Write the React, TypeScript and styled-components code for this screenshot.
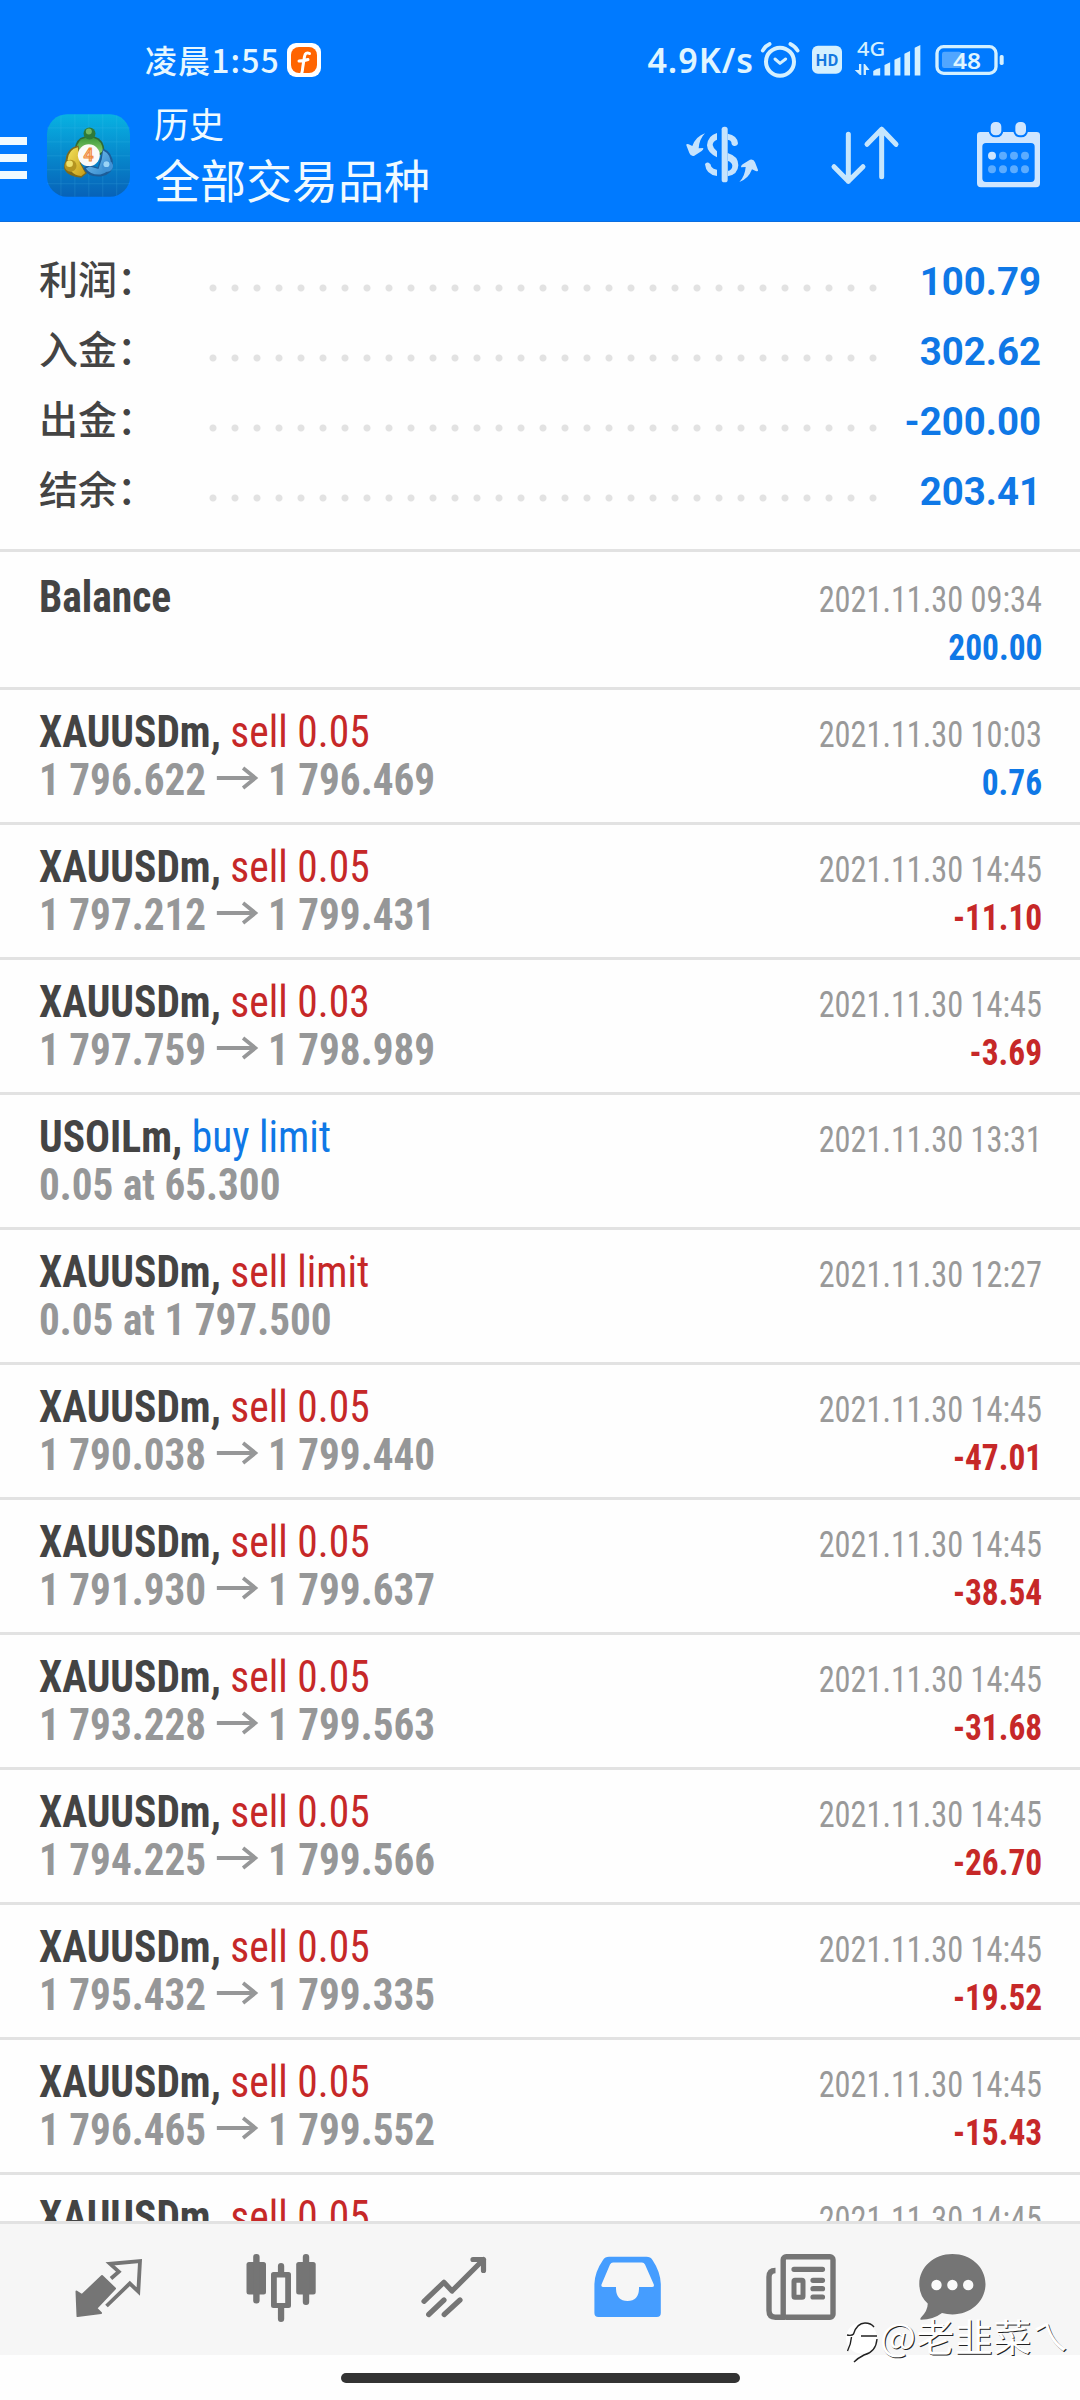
import React from "react";
import styled, { createGlobalStyle } from "styled-components";

const BLUE = "#007aff";
const VALUE_BLUE = "#0f78e6";
const RED = "#c62828";
const CJK = '"Noto Sans CJK SC", sans-serif';
const CONDENSED = '"Roboto Condensed", Roboto, sans-serif';

const GlobalStyle = createGlobalStyle`
  * { box-sizing: border-box; }
  html, body { margin: 0; padding: 0; background: #fefefe; }
  svg { display: block; flex: none; overflow: visible; }
`;

const Screen = styled.div`
  position: relative;
  display: flex;
  flex-direction: column;
  width: 1080px;
  height: 2400px;
  overflow: hidden;
  background: #fefefe;
`;

const Header = styled.header`
  flex: none;
  height: 222px;
  background: ${BLUE};
  border-bottom: 1px solid #0a6ee0;
  color: #f0faff;
`;

const StatusBar = styled.div`
  display: flex;
  align-items: center;
  height: 88px;
  padding: 32px 76px 0 145px;
`;

const Clock = styled.span`
  display: flex;
  align-items: center;
  height: 40px;
  padding-bottom: 2px;
  font: 500 32px/38px ${CJK};
  letter-spacing: 1.1px;
  color: #e6f7ff;
  width: 142px;
`;

const StatusRight = styled.div`
  display: flex;
  align-items: center;
  margin-left: auto;
  gap: 12px;
`;

const NetSpeed = styled.span`
  font: 600 34px/40px "Noto Sans", sans-serif;
  letter-spacing: 1px;
  color: #e0f5ff;
  margin-right: -6px;
  white-space: nowrap;
`;

const BatterySlot = styled.span`
  margin-left: 2px;
`;

const Toolbar = styled.div`
  display: flex;
  align-items: center;
  height: 134px;
  padding-right: 40px;
`;

const MenuButton = styled.div`
  display: flex;
  flex-direction: column;
  gap: 9px;
  width: 27px;
  margin-top: 5px;
  margin-right: 20px;
`;

const MenuBar = styled.span`
  height: 8px;
  background: #f0faff;
`;

const Titles = styled.div`
  display: flex;
  flex-direction: column;
  margin-left: 24px;
  font-family: ${CJK};
  color: #f0faff;
`;

const Title = styled.span`
  font-size: 35px;
  line-height: 46px;
`;

const Subtitle = styled.span`
  font-size: 46px;
  line-height: 64px;
`;

const Actions = styled.div`
  display: flex;
  align-items: center;
  margin-left: auto;
`;

const Action = styled.div<{ $before?: number }>`
  margin-left: ${(p) => p.$before ?? 0}px;
`;

const Summary = styled.section`
  flex: none;
  height: 330px;
  padding: 22px 39px 0 39px;
  border-bottom: 3px solid #e2e2e2;
`;

const SummaryRow = styled.div`
  display: grid;
  grid-template-columns: 163px 682px 1fr;
  align-items: center;
  height: 70px;
`;

const SummaryLabel = styled.span`
  padding-bottom: 4px;
  font: 500 39px/66px ${CJK};
  color: #444;
`;

const Leader = styled.span`
  height: 22px;
  margin-top: 17px;
  background: radial-gradient(circle at 50% 50%, #e2e2e2 3px, transparent 4px) 0 0 / 22px 22px repeat-x;
`;

const SummaryValue = styled.span`
  padding-top: 7px;
  font: 700 39px/63px Roboto, sans-serif;
  color: ${VALUE_BLUE};
  text-align: right;
  white-space: nowrap;
  transform: scaleX(0.985);
  transform-origin: right;
`;

const List = styled.section`
  flex: 1;
  min-height: 0;
  overflow: hidden;
  padding-top: 3px;
`;

const Row = styled.article`
  display: flex;
  justify-content: space-between;
  height: 135px;
  padding: 18px 38px 0 39px;
  border-bottom: 3px solid #e2e2e2;
  font-family: ${CONDENSED};
`;

const RowSide = styled.div<{ $end?: boolean }>`
  display: flex;
  flex-direction: column;
  align-items: ${(p) => (p.$end ? "flex-end" : "flex-start")};
  padding-top: ${(p) => (p.$end ? 3 : 0)}px;
`;

const Symbol = styled.span`
  font-size: 44px;
  line-height: 48px;
  font-weight: 700;
  color: #444;
  white-space: nowrap;
  transform: scaleX(0.943);
  transform-origin: left;
`;

const Side = styled.span<{ $tone: string }>`
  font-weight: 400;
  color: ${(p) => p.$tone};
`;

const Prices = styled.span`
  display: flex;
  align-items: center;
  gap: 10.5px;
  font-size: 44px;
  line-height: 48px;
  font-weight: 700;
  color: #969798;
  white-space: nowrap;
  transform: scaleX(0.936);
  transform-origin: left;
`;

const Time = styled.span`
  font-size: 36px;
  line-height: 48px;
  color: #999;
  white-space: nowrap;
  transform: scaleX(0.897);
  transform-origin: right;
`;

const Amount = styled.span<{ $tone: string }>`
  font-size: 36px;
  line-height: 48px;
  font-weight: 700;
  color: ${(p) => p.$tone};
  transform: scaleX(0.928);
  transform-origin: right;
`;

const Nav = styled.nav`
  flex: none;
  display: grid;
  grid-template-columns: 171px 175px 173px 172px 153px 67px;
  height: 134px;
  padding: 23px 0 0 75px;
  background: #f6f6f6;
  border-top: 3px solid #e2e2e2;
`;

const GestureArea = styled.div`
  flex: none;
  display: flex;
  justify-content: center;
  height: 45px;
  padding-top: 18px;
`;

const GesturePill = styled.div`
  width: 399px;
  height: 10px;
  border-radius: 5px;
  background: #333;
`;

const Watermark = styled.div`
  position: absolute;
  left: 842px;
  top: 2310px;
  display: flex;
  align-items: center;
  height: 50px;
  font: 400 38px/50px ${CJK};
  letter-spacing: 0.4px;
  color: #fff;
  text-shadow: 1px 1px 0 #222;
  white-space: nowrap;
`;

const ClockBadge = () => (
  <svg width="34" height="34" viewBox="0 0 34 34">
    <rect width="34" height="34" rx="9" fill="#fff" />
    <rect x="4" y="4" width="26" height="26" rx="8" fill="#ff6400" />
    <path d="M22.500 10.500Q18.500 8.500 17.500 13.500L15.800 24Q15.500 28 14.500 31M12 18Q17 18 21 16.500" stroke="#fff" strokeWidth="3" fill="none" strokeLinecap="round" />
  </svg>
);

const Alarm = () => (
  <svg width="40" height="40" viewBox="418 60 120 120" fill="none" stroke="#d4f0ff" strokeLinecap="round" strokeLinejoin="round">
    <circle cx="478" cy="125" r="42" strokeWidth="12" />
    <path d="M426 92Q432 79 447 72M509 72Q524 79 531 92" strokeWidth="11" />
    <path d="M463 117L478 130L495 117" strokeWidth="9" />
  </svg>
);

const Hd = () => (
  <svg width="30" height="40" viewBox="575 60 91 120">
    <rect x="575" y="77" width="91" height="85" rx="18" fill="#d4f0ff" />
    <text x="620.500" y="137" textAnchor="middle" fontFamily="Roboto, sans-serif" fontWeight="700" fontSize="49" textLength="68" fill="#1478e0">HD</text>
  </svg>
);

const Signal = () => (
  <svg width="67" height="40" viewBox="702 60 202 120" fill="#d4f0ff">
    <text x="711" y="108" fontFamily="Noto Sans, sans-serif" fontWeight="500" fontSize="59" textLength="85" lengthAdjust="spacingAndGlyphs">4G</text>
    <path d="M717 132h7v33h-4L704 150h13zM731 165v-33h4l14 18h-11v15z" />
    <path d="M760 167v-14q10-8 21-9v23zM794 167v-32l17-8v40zM824 167v-48l18-8v56zM854 167v-66l17-8v74zM885 167V83l17-8v92z" />
  </svg>
);

const Battery = () => (
  <svg width="69" height="40" viewBox="945 60 205 120">
    <rect x="950" y="80" width="177" height="80" rx="20" fill="none" stroke="#d4f0ff" strokeWidth="10" />
    <rect x="965" y="95" width="58" height="49" rx="7" fill="#d4f0ff" opacity=".38" />
    <rect x="1138" y="105" width="12" height="30" rx="5" fill="#d4f0ff" />
    <text x="1040" y="147" textAnchor="middle" fontFamily="Noto Sans, sans-serif" fontWeight="600" fontSize="66" textLength="84" lengthAdjust="spacingAndGlyphs" fill="#e0f5ff">48</text>
  </svg>
);

const AppIcon = () => (
  <svg width="83" height="83" viewBox="137 45 250 248">
    <defs>
      <linearGradient id="bg" x1="0" y1="0" x2="0" y2="1">
        <stop offset="0" stopColor="#08b2e2" />
        <stop offset=".5" stopColor="#0788cc" />
        <stop offset="1" stopColor="#0762b8" />
      </linearGradient>
      <linearGradient id="green" x1="0" y1="0" x2="0" y2="1">
        <stop offset="0" stopColor="#3f9a3c" />
        <stop offset="1" stopColor="#8ccf6e" />
      </linearGradient>
      <linearGradient id="gold" x1="0" y1="0" x2="1" y2="1">
        <stop offset="0" stopColor="#f3e35c" />
        <stop offset="1" stopColor="#c79c17" />
      </linearGradient>
      <linearGradient id="sky" x1="0" y1="0" x2="1" y2="1">
        <stop offset="0" stopColor="#7cc4f0" />
        <stop offset="1" stopColor="#2f86cc" />
      </linearGradient>
    </defs>
    <rect x="137" y="45" width="250" height="248" rx="60" fill="url(#bg)" />
    <path d="M179 48V290M221 45V293M263 45V293M305 45V293M347 48V290M137 86H387M137 128H387M137 170H387M137 212H387M137 254H387" stroke="#5fd0f5" strokeWidth="1.500" opacity=".3" />
    <path d="M221 152Q222 118 250 112H280Q310 120 311 160L290 172L240 160Z" fill="#2f6b35" />
    <path d="M226 150Q228 120 252 116H278Q304 124 306 156L290 165L240 158Z" fill="url(#green)" />
    <path d="M232 139Q196 146 193 184Q186 200 190 212Q200 232 240 236L258 222L240 195Z" fill="#7c6a1c" />
    <path d="M230 144Q202 150 199 182L208 214Q220 229 240 231L252 222L236 192Z" fill="url(#gold)" />
    <path d="M306 148Q336 160 336 196Q336 225 300 232Q262 236 246 208L262 196L290 205L298 175Z" fill="#1d5d98" />
    <path d="M306 154Q330 165 329 196Q326 220 298 226Q268 228 254 208L266 202L292 210L302 180Z" fill="url(#sky)" />
    <circle cx="265" cy="103" r="18" fill="#2f7a38" />
    <circle cx="263" cy="97" r="9" fill="#74b862" />
    <circle cx="208" cy="200" r="18" fill="#b49420" />
    <circle cx="205" cy="194" r="10" fill="#eee06a" />
    <circle cx="319" cy="201" r="17" fill="#3f92d6" />
    <circle cx="316" cy="195" r="9" fill="#9ad4f6" />
    <circle cx="263" cy="168" r="33" fill="#fbfaf8" />
    <text x="262" y="187" textAnchor="middle" fontFamily="Roboto, sans-serif" fontWeight="500" fontSize="53" fill="#f9c9a0" stroke="#f08a3c" strokeWidth="3">4</text>
  </svg>
);

const SwapArrow = "M255 340Q238 357 236 385L250 384Q251 389 245 393L223 407Q212 410 208 399L199 376Q198 370 206 373L217 378Q228 349 255 340Z";

const CurrencyIcon = () => (
  <svg width="72" height="70" viewBox="198 300 216 210" fill="#c6e3fd">
    <rect x="305" y="320" width="18" height="167" rx="8" />
    <path d="M323 341Q352 346 354 370Q352 379 342 378Q334 377 334 366Q332 360 323 359Z" />
    <path d="M291 339V359Q278 364 278 375Q280 386 291 394V412Q262 398 261 376Q264 346 291 339Z" />
    <path d="M255 433Q257 426 266 428Q273 431 274 440Q279 447 291 449V468Q258 464 255 433Z" />
    <path fillRule="evenodd" d="M323 399Q355 408 355 436Q354 464 323 469ZM322 422V453Q337 450 337 437Q336 426 322 422Z" />
    <path d={SwapArrow} />
    <path d={SwapArrow} transform="rotate(180 306.500 413)" />
  </svg>
);

const SortIcon = () => (
  <svg width="68" height="70" viewBox="633 300 204 210" fill="none" stroke="#c6e6fd" strokeWidth="15" strokeLinecap="round" strokeLinejoin="round">
    <path d="M685 343V484M642 440L685 484L729 440M785 470V328M741 373L785 328L828 373" />
  </svg>
);

const CalendarIcon = () => (
  <svg width="63" height="70" viewBox="1071 300 189 210">
    <path fillRule="evenodd" fill="#cfe6ff" d="M1081 336H1250Q1260 336 1260 346V490Q1260 502 1248 502H1083Q1071 502 1071 490V346Q1071 336 1081 336ZM1098 369Q1087 369 1087 380V475Q1087 486 1098 486H1233Q1244 486 1244 475V380Q1244 369 1233 369Z" />
    {[1128, 1202].map((x) => (
      <rect key={x} x={x - 19} y="303" width="38" height="46" rx="17" fill="#cfe6ff" stroke={BLUE} strokeWidth="6" />
    ))}
    {[407, 448].map((y) =>
      [1116, 1149, 1182, 1215].map((x) => (
        <circle key={`${x}-${y}`} cx={x} cy={y} r="12" fill={x === 1116 && y === 407 ? "#cfe6ff" : "#5cacff"} />
      ))
    )}
  </svg>
);

const PriceArrow = () => (
  <svg width="45" height="28" viewBox="0 0 45 28" fill="none" stroke="#969798" strokeWidth="4">
    <path d="M1 12H42M29 2L42 12L29 22" />
  </svg>
);

const GREY = "#757575";

const TradeTab = () => (
  <svg width="67" height="80" viewBox="75 87 67 80">
    <path d="M102 116L115 128.500L97.500 147L96.500 148.500L101 153L77.500 156L76.500 131.500L82 135Z" fill={GREY} stroke={GREY} strokeWidth="2" strokeLinejoin="round" />
    <path d="M111 118.500L118.800 111.700L110 103.800L140 101L138.300 131.500L129.800 123.500L106.500 146" fill="none" stroke={GREY} strokeWidth="3.800" />
  </svg>
);

const ChartTab = () => (
  <svg width="71" height="80" viewBox="246 87 71 80" fill={GREY}>
    <rect x="246.500" y="102" width="19.500" height="32.500" rx="2.500" />
    <rect x="253.200" y="94" width="6.400" height="49.500" rx="3" />
    <rect x="296.200" y="102" width="19.500" height="32.500" rx="2.500" />
    <rect x="302.800" y="94" width="6.400" height="51" rx="3" />
    <path fillRule="evenodd" d="M273.500 112H288.500Q291 112 291 114.500V145.500Q291 148 288.500 148H273.500Q271 148 271 145.500V114.500Q271 112 273.500 112ZM276.800 117.500V143H285.200V117.500Z" />
    <path d="M277.900 113V106Q278 103 281 103Q284.200 103 284.200 106V113ZM277.900 147V159Q278 162 281 162Q284.200 162 284.200 159V147Z" />
  </svg>
);

const TrendTab = () => (
  <svg width="67" height="80" viewBox="421 87 67 80" fill="none" stroke={GREY} strokeWidth="5.200" strokeLinecap="round" strokeLinejoin="round">
    <path d="M424 141.300L443.900 122.300L452 131L483.500 99.500M473 99.500H483.500V110.500M428.700 154.500L444 140M444.200 154.500L460 140" />
  </svg>
);

const TrayTab = () => (
  <svg width="67" height="80" viewBox="594 87 67 80">
    <path fillRule="evenodd" fill="#459dff" d="M609 96.700H646.500Q650.500 96.700 652.500 100Q660.500 112 660.800 124V153Q660.800 157 656.800 157H598.400Q594.400 157 594.400 153V124Q594.700 112 603 100Q605 96.700 609 96.700ZM613 102.500Q611 102.500 610 104.500L601.500 124.500Q600.800 127 603.500 127H616V129Q616.500 141 627.500 141Q638.500 141 639 129V127H652Q654.500 127 653.800 124.500L645 104.500Q644 102.500 642 102.500Z" />
  </svg>
);

const NewsTab = () => (
  <svg width="71" height="80" viewBox="766 87 71 80" fill="none" stroke={GREY} strokeWidth="5.400">
    <rect x="783.200" y="96.700" width="49.800" height="60.500" rx="3" />
    <path d="M775.500 110.500Q769 110.500 769 117V150.500Q769 157.200 775.500 157.200H785" />
    <rect x="794" y="120.300" width="9" height="17" rx="1" strokeWidth="5" />
    <path d="M794 109.300H822.500M813 120.300H822.500M813 128.700H822.500M813 137H822.500" strokeLinecap="round" strokeWidth="5.200" />
  </svg>
);

const ChatTab = () => (
  <svg width="67" height="80" viewBox="919.500 87 67 80">
    <path fill={GREY} d="M952.900 94C971.500 94 986 107 986 124C986 141 971.500 154.400 952.900 154.400Q947.500 154.400 942.500 153Q934 159.500 921.500 159.800Q920 159.500 921.500 157.500Q928.500 150.500 928.200 143.500Q919.800 136 919.800 124C919.800 107 934.500 94 952.900 94Z" />
    {[937, 952.900, 968.700].map((x) => (
      <circle key={x} cx={x} cy="125" r="5.200" fill="#fafafa" />
    ))}
  </svg>
);

const WatermarkLogo = () => (
  <svg width="38" height="50" viewBox="0 0 38 50" fill="none">
    <circle cx="19.500" cy="28" r="15.500" fill="#fff" />
    <path d="M5 25Q10 26 11.500 24Q15 13 23 13Q29 13 32 17M9.500 27Q9 34 5.500 41M19 26H35M35 29Q34 42 22 45Q16 48 12 52" stroke="#222" strokeWidth="1.400" />
  </svg>
);

const summary = [
  ["利润：", "100.79"],
  ["入金：", "302.62"],
  ["出金：", "-200.00"],
  ["结余：", "203.41"],
];

type Deal = {
  symbol: string;
  side?: string;
  from?: string;
  to?: string;
  time: string;
  amount?: string;
};

const gold = (side: string, from: string, to: string, amount: string, time = "14:45"): Deal => ({
  symbol: "XAUUSDm",
  side,
  from,
  to,
  time: `2021.11.30 ${time}`,
  amount,
});

const deals: Deal[] = [
  { symbol: "Balance", time: "2021.11.30 09:34", amount: "200.00" },
  gold("sell 0.05", "1 796.622", "1 796.469", "0.76", "10:03"),
  gold("sell 0.05", "1 797.212", "1 799.431", "-11.10"),
  gold("sell 0.03", "1 797.759", "1 798.989", "-3.69"),
  { symbol: "USOILm", side: "buy limit", from: "0.05 at 65.300", time: "2021.11.30 13:31" },
  { symbol: "XAUUSDm", side: "sell limit", from: "0.05 at 1 797.500", time: "2021.11.30 12:27" },
  gold("sell 0.05", "1 790.038", "1 799.440", "-47.01"),
  gold("sell 0.05", "1 791.930", "1 799.637", "-38.54"),
  gold("sell 0.05", "1 793.228", "1 799.563", "-31.68"),
  gold("sell 0.05", "1 794.225", "1 799.566", "-26.70"),
  gold("sell 0.05", "1 795.432", "1 799.335", "-19.52"),
  gold("sell 0.05", "1 796.465", "1 799.552", "-15.43"),
  { symbol: "XAUUSDm", side: "sell 0.05", time: "2021.11.30 14:45" },
];

const DealRow = ({ symbol, side, from, to, time, amount }: Deal) => (
  <Row>
    <RowSide>
      <Symbol>
        {symbol}
        {side && (
          <>
            , <Side $tone={side.startsWith("buy") ? VALUE_BLUE : RED}>{side}</Side>
          </>
        )}
      </Symbol>
      {from && (
        <Prices>
          <span>{from}</span>
          {to && <PriceArrow />}
          {to && <span>{to}</span>}
        </Prices>
      )}
    </RowSide>
    <RowSide $end>
      <Time>{time}</Time>
      {amount && <Amount $tone={amount.startsWith("-") ? RED : VALUE_BLUE}>{amount}</Amount>}
    </RowSide>
  </Row>
);

export default function App() {
  return (
    <Screen>
      <GlobalStyle />
      <Header>
        <StatusBar>
          <Clock>凌晨1:55</Clock>
          <ClockBadge />
          <StatusRight>
            <NetSpeed>4.9K/s</NetSpeed>
            <Alarm />
            <Hd />
            <Signal />
            <BatterySlot>
              <Battery />
            </BatterySlot>
          </StatusRight>
        </StatusBar>
        <Toolbar>
          <MenuButton>
            <MenuBar />
            <MenuBar />
            <MenuBar />
          </MenuButton>
          <AppIcon />
          <Titles>
            <Title>历史</Title>
            <Subtitle>全部交易品种</Subtitle>
          </Titles>
          <Actions>
            <Action>
              <CurrencyIcon />
            </Action>
            <Action $before={73}>
              <SortIcon />
            </Action>
            <Action $before={78}>
              <CalendarIcon />
            </Action>
          </Actions>
        </Toolbar>
      </Header>
      <Summary>
        {summary.map(([label, value]) => (
          <SummaryRow key={label}>
            <SummaryLabel>{label}</SummaryLabel>
            <Leader />
            <SummaryValue>{value}</SummaryValue>
          </SummaryRow>
        ))}
      </Summary>
      <List>
        {deals.map((deal, i) => (
          <DealRow key={i} {...deal} />
        ))}
      </List>
      <Nav>
        <TradeTab />
        <ChartTab />
        <TrendTab />
        <TrayTab />
        <NewsTab />
        <ChatTab />
      </Nav>
      <GestureArea>
        <GesturePill />
      </GestureArea>
      <Watermark>
        <WatermarkLogo />
        <span>@老韭菜ㄟ</span>
      </Watermark>
    </Screen>
  );
}
